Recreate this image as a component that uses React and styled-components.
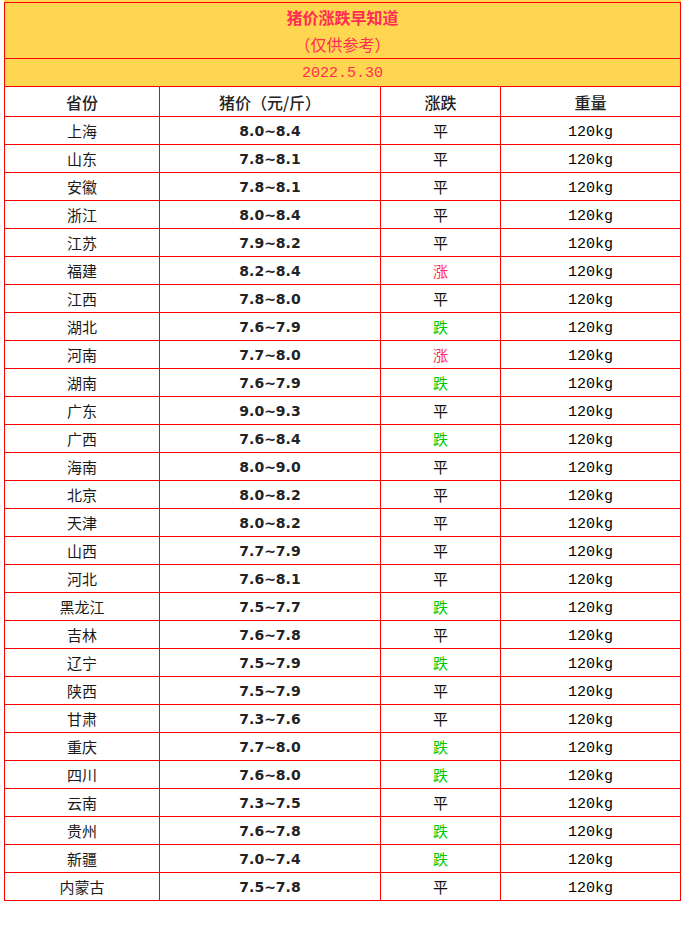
import React from "react";
import styled, { createGlobalStyle } from "styled-components";

const red = "#ff0000";
const yellow = "#ffd650";
const pink = "#ff2d55";
const green = "#00c800";

const GlobalStyle = createGlobalStyle`
  body {
    margin: 0;
    background: #fff;
    font-family: "Noto Sans CJK SC", sans-serif;
  }
`;

const rows = [
  ["上海", "8.0~8.4", "平"],
  ["山东", "7.8~8.1", "平"],
  ["安徽", "7.8~8.1", "平"],
  ["浙江", "8.0~8.4", "平"],
  ["江苏", "7.9~8.2", "平"],
  ["福建", "8.2~8.4", "涨"],
  ["江西", "7.8~8.0", "平"],
  ["湖北", "7.6~7.9", "跌"],
  ["河南", "7.7~8.0", "涨"],
  ["湖南", "7.6~7.9", "跌"],
  ["广东", "9.0~9.3", "平"],
  ["广西", "7.6~8.4", "跌"],
  ["海南", "8.0~9.0", "平"],
  ["北京", "8.0~8.2", "平"],
  ["天津", "8.0~8.2", "平"],
  ["山西", "7.7~7.9", "平"],
  ["河北", "7.6~8.1", "平"],
  ["黑龙江", "7.5~7.7", "跌"],
  ["吉林", "7.6~7.8", "平"],
  ["辽宁", "7.5~7.9", "跌"],
  ["陕西", "7.5~7.9", "平"],
  ["甘肃", "7.3~7.6", "平"],
  ["重庆", "7.7~8.0", "跌"],
  ["四川", "7.6~8.0", "跌"],
  ["云南", "7.3~7.5", "平"],
  ["贵州", "7.6~7.8", "跌"],
  ["新疆", "7.0~7.4", "跌"],
  ["内蒙古", "7.5~7.8", "平"],
];

const trendColor = {
  平: "#111",
  涨: pink,
  跌: green,
};

const Sheet = () => (
  <Wrapper>
    <Grid>
      <Title>
        <TitleMain>猪价涨跌早知道</TitleMain>
        <TitleSub>（仅供参考）</TitleSub>
      </Title>
      <DateRow>2022.5.30</DateRow>
      <HeadCell>省份</HeadCell>
      <HeadCell>猪价（元/斤）</HeadCell>
      <HeadCell>涨跌</HeadCell>
      <HeadCell>重量</HeadCell>
      {rows.map(([province, price, trend]) => (
        <React.Fragment key={province}>
          <Cell>{province}</Cell>
          <PriceCell>{price}</PriceCell>
          <TrendCell color={trendColor[trend]}>{trend}</TrendCell>
          <WeightCell>120kg</WeightCell>
        </React.Fragment>
      ))}
    </Grid>
  </Wrapper>
);

const App = () => (
  <>
    <GlobalStyle />
    <Sheet />
  </>
);

const Wrapper = styled.div`
  margin-left: 4px;
  width: 677px;
  padding-top: 2px;
  background: linear-gradient(${yellow}, ${yellow}) top / 100% 2px no-repeat;
`;

const Grid = styled.div`
  display: grid;
  grid-template-columns: 154px 220px 119px 179px;
  grid-template-rows: 55px 27px 29px;
  grid-auto-rows: 27px;
  gap: 1px;
  padding: 1px;
  background: ${red};
`;

const Title = styled.div`
  grid-column: 1 / -1;
  background: ${yellow};
  display: flex;
  flex-direction: column;
  align-items: center;
  justify-content: center;
  color: ${pink};
  font-size: 16px;
  line-height: 27px;
`;

const TitleMain = styled.div`
  font-weight: bold;
`;

const TitleSub = styled.div`
  font-weight: normal;
`;

const DateRow = styled.div`
  grid-column: 1 / -1;
  background: ${yellow};
  display: flex;
  align-items: center;
  justify-content: center;
  color: ${pink};
  font-family: "Liberation Mono", monospace;
  font-size: 15px;
  padding-top: 2px;
`;

const Cell = styled.div`
  background: #fff;
  display: flex;
  align-items: center;
  justify-content: center;
  color: #1a1a1a;
  font-size: 15px;
`;

const HeadCell = styled(Cell)`
  font-weight: 500;
  font-size: 16px;
  color: #222;
`;

const PriceCell = styled(Cell)`
  font-family: "DejaVu Sans", sans-serif;
  font-weight: bold;
  font-size: 14px;
  color: #222;
`;

const TrendCell = styled(Cell)`
  color: ${props => props.color};
  font-size: 15px;
`;

const WeightCell = styled(Cell)`
  font-family: "Liberation Mono", monospace;
  font-size: 15px;
  color: #000;
  padding-top: 3px;
`;

export default App;
